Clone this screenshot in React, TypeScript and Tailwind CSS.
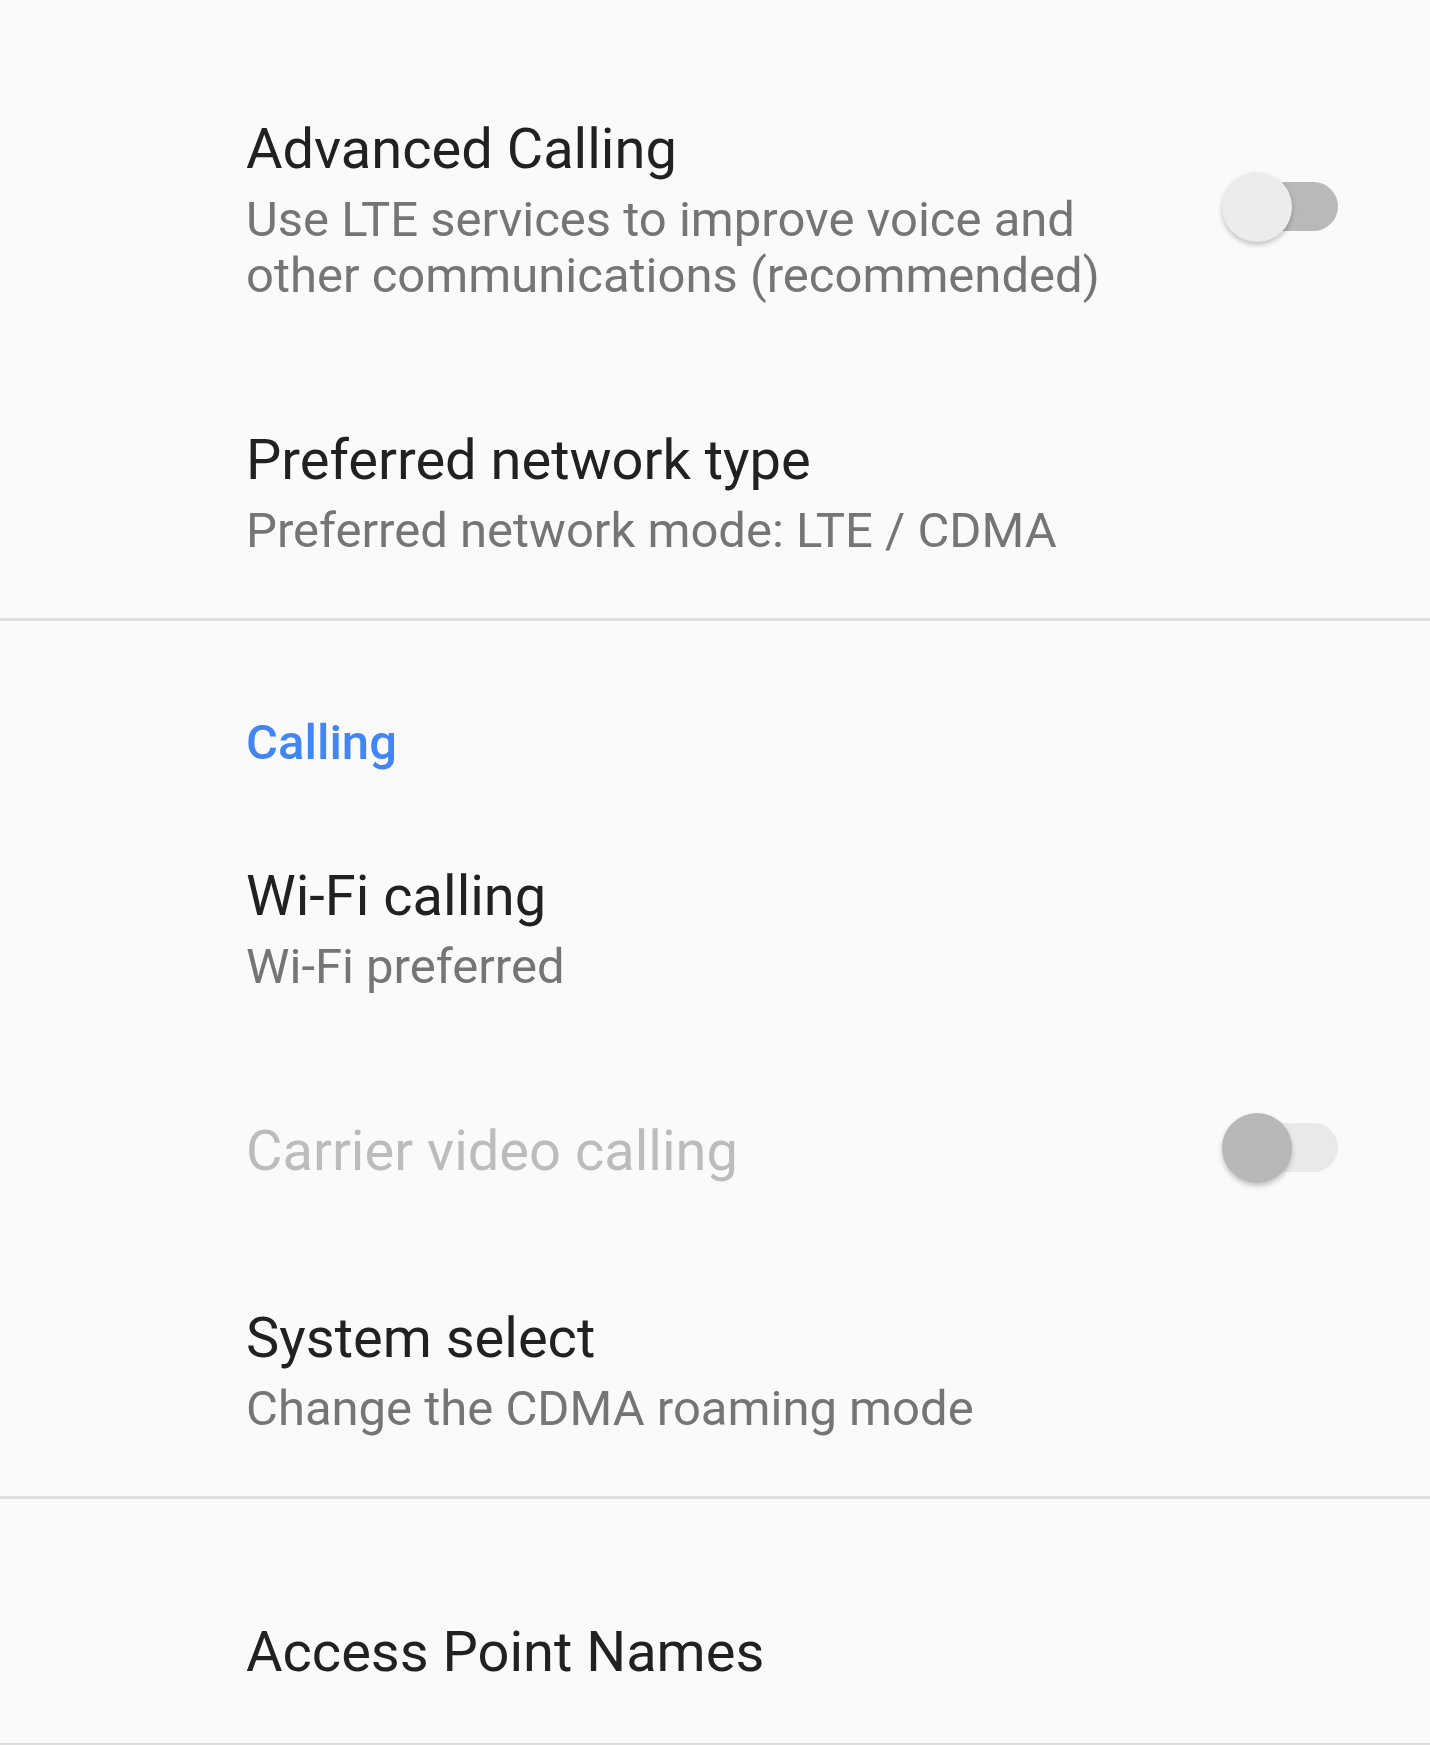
import React from 'react';

type SwitchProps = {
  disabled?: boolean;
};

function Switch({ disabled = false }: SwitchProps) {
  return (
    <div className="relative -my-px h-[70px] w-[116px] shrink-0 -translate-y-[3px]">
      {/* track */}
      <div
        className={`absolute left-[10px] right-0 top-[10px] h-[49px] rounded-full ${
          disabled ? 'bg-[#e9e9e9]' : 'bg-[#b9b9b9]'
        }`}
      />
      {/* thumb */}
      <div
        className={`absolute left-0 top-0 h-[70px] w-[70px] rounded-full shadow-[0_3px_5px_rgba(0,0,0,0.22)] ${
          disabled ? 'bg-[#b8b8b8]' : 'bg-[#ececec]'
        }`}
      />
    </div>
  );
}

type ItemProps = {
  title: string;
  summary?: string;
  disabled?: boolean;
  toggle?: boolean;
  className?: string;
};

function Item({ title, summary, disabled = false, toggle = false, className = '' }: ItemProps) {
  return (
    <div className={`flex items-center pl-[246px] pr-[92px] ${className}`}>
      <div className="min-w-0 flex-1 pr-[40px]">
        <div
          className={`text-[56px] leading-[68px] ${
            disabled ? 'text-[#bcbcbc]' : 'text-[#212121]'
          }`}
        >
          {title}
        </div>
        {summary && (
          <div className="mt-[9px] text-[49px] leading-[56px] text-[#757575]">{summary}</div>
        )}
      </div>
      {toggle && <Switch disabled={disabled} />}
    </div>
  );
}

function Divider() {
  return <div className="h-[3px] w-full bg-[#dedede]" />;
}

export default function App() {
  return (
    <div className="min-h-[1745px] w-full overflow-hidden bg-[#fafafa] font-['Roboto',sans-serif]">
      <Item
        className="pt-[115px] pb-[61px]"
        title="Advanced Calling"
        summary="Use LTE services to improve voice and other communications (recommended)"
        toggle
      />
      <Item
        className="pt-[61px] pb-[59px]"
        title="Preferred network type"
        summary="Preferred network mode: LTE / CDMA"
      />
      <Divider />

      <div className="pl-[246px] pt-[94px] pb-[30px]">
        <div className="text-[49px] font-medium leading-[56px] text-[#4285f4]">Calling</div>
      </div>
      <Item className="pt-[61px] pb-[61px]" title="Wi-Fi calling" summary="Wi-Fi preferred" />
      <Item className="pt-[61px] pb-[59px]" title="Carrier video calling" disabled toggle />
      <Item
        className="pt-[60px] pb-[59px]"
        title="System select"
        summary="Change the CDMA roaming mode"
      />
      <Divider />

      <Item className="pt-[119px] pb-[57px]" title="Access Point Names" />
      <Divider />
    </div>
  );
}
